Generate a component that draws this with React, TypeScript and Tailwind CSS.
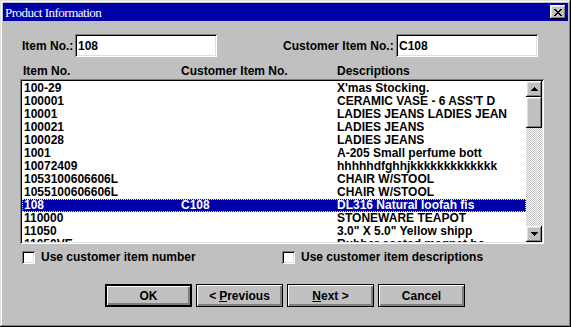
const rows: [string, string, string][] = [
  ['100-29', '', "X'mas Stocking."],
  ['100001', '', "CERAMIC VASE - 6 ASS'T D"],
  ['10001', '', 'LADIES JEANS LADIES JEAN'],
  ['100021', '', 'LADIES JEANS'],
  ['100028', '', 'LADIES JEANS'],
  ['1001', '', 'A-205 Small perfume bott'],
  ['10072409', '', 'hhhhhdfghhjkkkkkkkkkkkkk'],
  ['1053100606606L', '', 'CHAIR W/STOOL'],
  ['1055100606606L', '', 'CHAIR W/STOOL'],
  ['108', 'C108', 'DL316 Natural loofah fis'],
  ['110000', '', 'STONEWARE TEAPOT'],
  ['11050', '', '3.0" X 5.0" Yellow shipp'],
  ['11050VE', '', 'Rubber coated magnet bo'],
];

const SELECTED = 9;

const raised =
  'shadow-[inset_-1px_-1px_#000,inset_1px_1px_#fff,inset_-2px_-2px_#808080,inset_2px_2px_#dfdfdf]';
const sunken =
  'shadow-[inset_1px_1px_#808080,inset_-1px_-1px_#fff,inset_2px_2px_#000,inset_-2px_-2px_#dfdfdf]';

function CloseGlyph() {
  // pixel X, 8x7
  const px: [number, number][] = [];
  for (let r = 0; r < 7; r++) {
    const a = r < 4 ? r : 6 - r;
    [a, a + 1, 6 - a, 7 - a].forEach(x => px.push([x, r]));
  }
  return (
    <svg width="8" height="7" viewBox="0 0 8 7" shapeRendering="crispEdges">
      {px.map(([x, y], i) => (
        <rect key={i} x={x} y={y} width="1" height="1" fill="#000" />
      ))}
    </svg>
  );
}

function Arrow({ down }: { down?: boolean }) {
  return (
    <svg width="7" height="4" viewBox="0 0 7 4" shapeRendering="crispEdges">
      {[0, 1, 2, 3].map(i => {
        const row = down ? 3 - i : i;
        return <rect key={i} x={3 - row} y={i} width={row * 2 + 1} height="1" fill="#000" />;
      })}
    </svg>
  );
}

function Checkbox({ label }: { label: string }) {
  return (
    <div className="flex items-center">
      <div className={`w-[13px] h-[13px] bg-white ${sunken}`} />
      <span className="ml-[6px] leading-[13px]">{label}</span>
    </div>
  );
}

function Button({ children, isDefault }: { children: React.ReactNode; isDefault?: boolean }) {
  return (
    <button
      type="button"
      className={`w-[87px] h-[23px] bg-[#c0c0c0] flex items-center justify-center leading-none ${
        isDefault ? 'border-2' : 'border'
      } border-black shadow-[inset_1px_1px_#fff,inset_-1px_-1px_#808080,inset_-2px_-2px_#808080]`}
    >
      {children}
    </button>
  );
}

export default function App() {
  return (
    <div
      className={`w-[571px] h-[327px] bg-[#c0c0c0] p-[3px] font-['Liberation_Sans',Arial,sans-serif] text-[12px] font-bold text-black shadow-[inset_-1px_-1px_#000,inset_1px_1px_#dfdfdf,inset_-2px_-2px_#808080,inset_2px_2px_#fff]`}
    >
      {/* title bar */}
      <div className="h-[18px] bg-[#0000a8] flex items-center justify-between pl-[2px] pr-[2px]">
        <span className="font-['Liberation_Serif','Times_New_Roman',serif] font-normal text-[13px] tracking-[-0.5px] text-white leading-none">
          Product Information
        </span>
        <div className={`w-[16px] h-[14px] bg-[#c0c0c0] flex items-center justify-center ${raised}`}>
          <CloseGlyph />
        </div>
      </div>

      <div className="pl-[17px]">
        {/* search fields */}
        <div className="mt-[13px] flex items-center h-[23px]">
          <span className="ml-[2px] w-[53px]">Item No.:</span>
          <div className={`w-[142px] h-[23px] bg-white px-[3px] flex items-center ${sunken}`}>108</div>
          <span className="ml-[66px] w-[113px]">Customer Item No.:</span>
          <div className={`w-[142px] h-[23px] bg-white px-[3px] flex items-center ${sunken}`}>C108</div>
        </div>

        {/* column headers */}
        <div className="mt-[8px] h-[14px] leading-[12px] grid grid-cols-[158px_156px_1fr] pl-[3px]">
          <span>Item No.</span>
          <span>Customer Item No.</span>
          <span>Descriptions</span>
        </div>

        {/* list */}
        <div className={`w-[524px] h-[165px] bg-white p-[2px] flex ${sunken}`}>
          <div className="flex-1 overflow-hidden pt-[1px]">
            {rows.map((r, i) => (
              <div
                key={i}
                className={`h-[13px] leading-[13px] grid grid-cols-[157px_156px_1fr] pl-[2px] whitespace-nowrap ${
                  i === SELECTED
                    ? 'bg-[#0000a8] text-white outline-1 outline-dotted outline-[#ffff00] -outline-offset-1'
                    : ''
                }`}
              >
                <span>{r[0]}</span>
                <span>{r[1]}</span>
                <span>{r[2]}</span>
              </div>
            ))}
          </div>
          <div className="w-[16px] flex flex-col">
            <div className={`h-[16px] bg-[#c0c0c0] flex items-center justify-center ${raised}`}>
              <Arrow />
            </div>
            <div className={`h-[31px] bg-[#c0c0c0] ${raised}`} />
            <div className="flex-1 bg-[image:conic-gradient(#fff_25%,#c0c0c0_0_50%,#fff_0_75%,#c0c0c0_0)] bg-[length:2px_2px]" />
            <div className={`h-[16px] bg-[#c0c0c0] flex items-center justify-center ${raised}`}>
              <Arrow down />
            </div>
          </div>
        </div>

        {/* options */}
        <div className="mt-[7px] flex h-[13px]">
          <div className="w-[262px] pl-[2px]">
            <Checkbox label="Use customer item number" />
          </div>
          <Checkbox label="Use customer item descriptions" />
        </div>

        {/* actions */}
        <div className="mt-[20px] flex gap-[4px] pl-[85px]">
          <Button isDefault>OK</Button>
          <Button>
            &lt; <span className="underline ml-[3px]">P</span>revious
          </Button>
          <Button>
            <span className="underline">N</span>ext &gt;
          </Button>
          <Button>Cancel</Button>
        </div>
      </div>
    </div>
  );
}
